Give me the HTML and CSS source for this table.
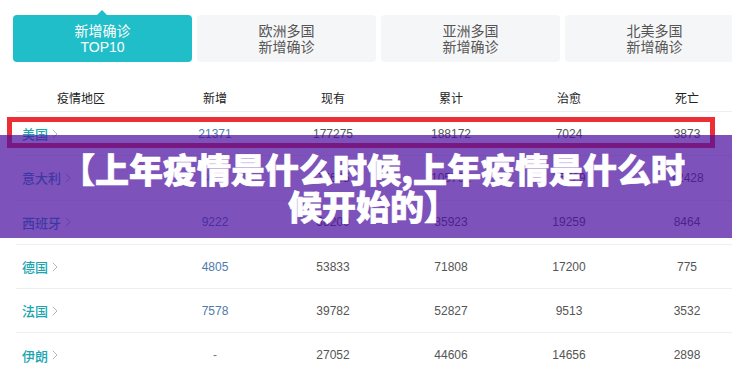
FILE: index.html
```html
<!DOCTYPE html>
<html lang="zh-CN">
<head>
<meta charset="utf-8">
<title>疫情数据</title>
<link rel="stylesheet" href="styles.css">
</head>
<body>
<div class="page">
  <div class="tabs">
    <div class="tab active">新增确诊<br>TOP10</div>
    <div class="tab">欧洲多国<br>新增确诊</div>
    <div class="tab">亚洲多国<br>新增确诊</div>
    <div class="tab">北美多国<br>新增确诊</div>
  </div>
  <div class="table">
    <div class="row head">
      <div class="cell first">疫情地区</div>
      <div class="cell">新增</div>
      <div class="cell">现有</div>
      <div class="cell">累计</div>
      <div class="cell">治愈</div>
      <div class="cell">死亡</div>
    </div>
    <div class="row">
      <div class="cell first name">美国<svg class="chev" width="6" height="10" viewBox="0 0 6 10"><polyline points="0.8,0.8 5,5 0.8,9.2"/></svg></div>
      <div class="cell add">21371</div>
      <div class="cell">177275</div>
      <div class="cell">188172</div>
      <div class="cell">7024</div>
      <div class="cell">3873</div>
    </div>
    <div class="row">
      <div class="cell first name">意大利<svg class="chev" width="6" height="10" viewBox="0 0 6 10"><polyline points="0.8,0.8 5,5 0.8,9.2"/></svg></div>
      <div class="cell add">4050</div>
      <div class="cell">77635</div>
      <div class="cell">105792</div>
      <div class="cell">15729</div>
      <div class="cell">12428</div>
    </div>
    <div class="row">
      <div class="cell first name">西班牙<svg class="chev" width="6" height="10" viewBox="0 0 6 10"><polyline points="0.8,0.8 5,5 0.8,9.2"/></svg></div>
      <div class="cell add">9222</div>
      <div class="cell">58200</div>
      <div class="cell">85923</div>
      <div class="cell">19259</div>
      <div class="cell">8464</div>
    </div>
    <div class="row">
      <div class="cell first name">德国<svg class="chev" width="6" height="10" viewBox="0 0 6 10"><polyline points="0.8,0.8 5,5 0.8,9.2"/></svg></div>
      <div class="cell add">4805</div>
      <div class="cell">53833</div>
      <div class="cell">71808</div>
      <div class="cell">17200</div>
      <div class="cell">775</div>
    </div>
    <div class="row">
      <div class="cell first name">法国<svg class="chev" width="6" height="10" viewBox="0 0 6 10"><polyline points="0.8,0.8 5,5 0.8,9.2"/></svg></div>
      <div class="cell add">7578</div>
      <div class="cell">39782</div>
      <div class="cell">52827</div>
      <div class="cell">9513</div>
      <div class="cell">3532</div>
    </div>
    <div class="row">
      <div class="cell first name">伊朗<svg class="chev" width="6" height="10" viewBox="0 0 6 10"><polyline points="0.8,0.8 5,5 0.8,9.2"/></svg></div>
      <div class="cell dash">-</div>
      <div class="cell">27052</div>
      <div class="cell">44606</div>
      <div class="cell">14656</div>
      <div class="cell">2898</div>
    </div>
  </div>
  <div class="highlight"></div>
  <div class="banner"><div class="banner-text">【上年疫情是什么时候,上年疫情是什么时候开始的】</div></div>
</div>
</body>
</html>
```

FILE: styles.css
```css
html, body {
  margin: 0;
  padding: 0;
  background: #ffffff;
}
body {
  width: 732px;
  height: 375px;
  overflow: hidden;
  font-family: "Liberation Sans", "Noto Sans CJK SC", sans-serif;
}
.page {
  position: relative;
  width: 732px;
  height: 375px;
  overflow: hidden;
}
.tabs {
  display: flex;
  gap: 5px;
  padding: 15px 0 0 13px;
  width: 760px;
}
.tab {
  position: relative;
  flex: none;
  width: 179px;
  height: 47px;
  border-radius: 4px;
  background: #f5f6f7;
  color: #555555;
  font-size: 14px;
  line-height: 16px;
  display: flex;
  align-items: center;
  justify-content: center;
  text-align: center;
}
.tab.active {
  background: #1fbec8;
  color: #ffffff;
}
.tab.active::before {
  content: "";
  position: absolute;
  left: 84px;
  top: -5px;
  border-left: 5px solid transparent;
  border-right: 5px solid transparent;
  border-bottom: 5px solid #1fbec8;
}
.table {
  margin: 21px 0 0 16px;
  width: 730px;
}
.row {
  display: grid;
  grid-template-columns: 140px repeat(5, 118px);
  align-items: center;
  height: 44.3px;
  box-sizing: border-box;
  border-top: 1px solid #efefef;
  font-size: 12px;
  color: #555555;
}
.row.head {
  height: 28px;
  border-top: none;
  color: #222222;
}
.cell {
  text-align: center;
}
.cell.first {
  text-align: left;
}
.row.head .cell.first {
  padding-left: 41px;
}
.cell.name {
  display: flex;
  align-items: center;
  gap: 4px;
  padding-left: 6px;
  color: #1ba5b0;
  font-size: 13px;
  font-weight: 500;
}
.chev {
  fill: none;
  stroke: #b5b5b5;
  stroke-width: 1;
}
.cell.add {
  color: #4f7bab;
}
.cell.dash {
  color: #777777;
}
.highlight {
  position: absolute;
  left: 7px;
  top: 117px;
  width: 708px;
  height: 31px;
  box-sizing: border-box;
  border: 5px solid #ec2f35;
}
.banner {
  position: absolute;
  left: 0;
  top: 135px;
  width: 732px;
  height: 103px;
  box-sizing: border-box;
  padding: 0 44px 0 58px;
  background: rgba(75, 15, 160, 0.72);
  display: flex;
  align-items: center;
  justify-content: center;
}
.banner-text {
  color: #ffffff;
  font-family: "Noto Sans CJK SC", sans-serif;
  font-weight: 900;
  font-size: 34px;
  line-height: 37px;
  text-align: center;
  -webkit-text-stroke: 0.7px #ffffff;
}
```
